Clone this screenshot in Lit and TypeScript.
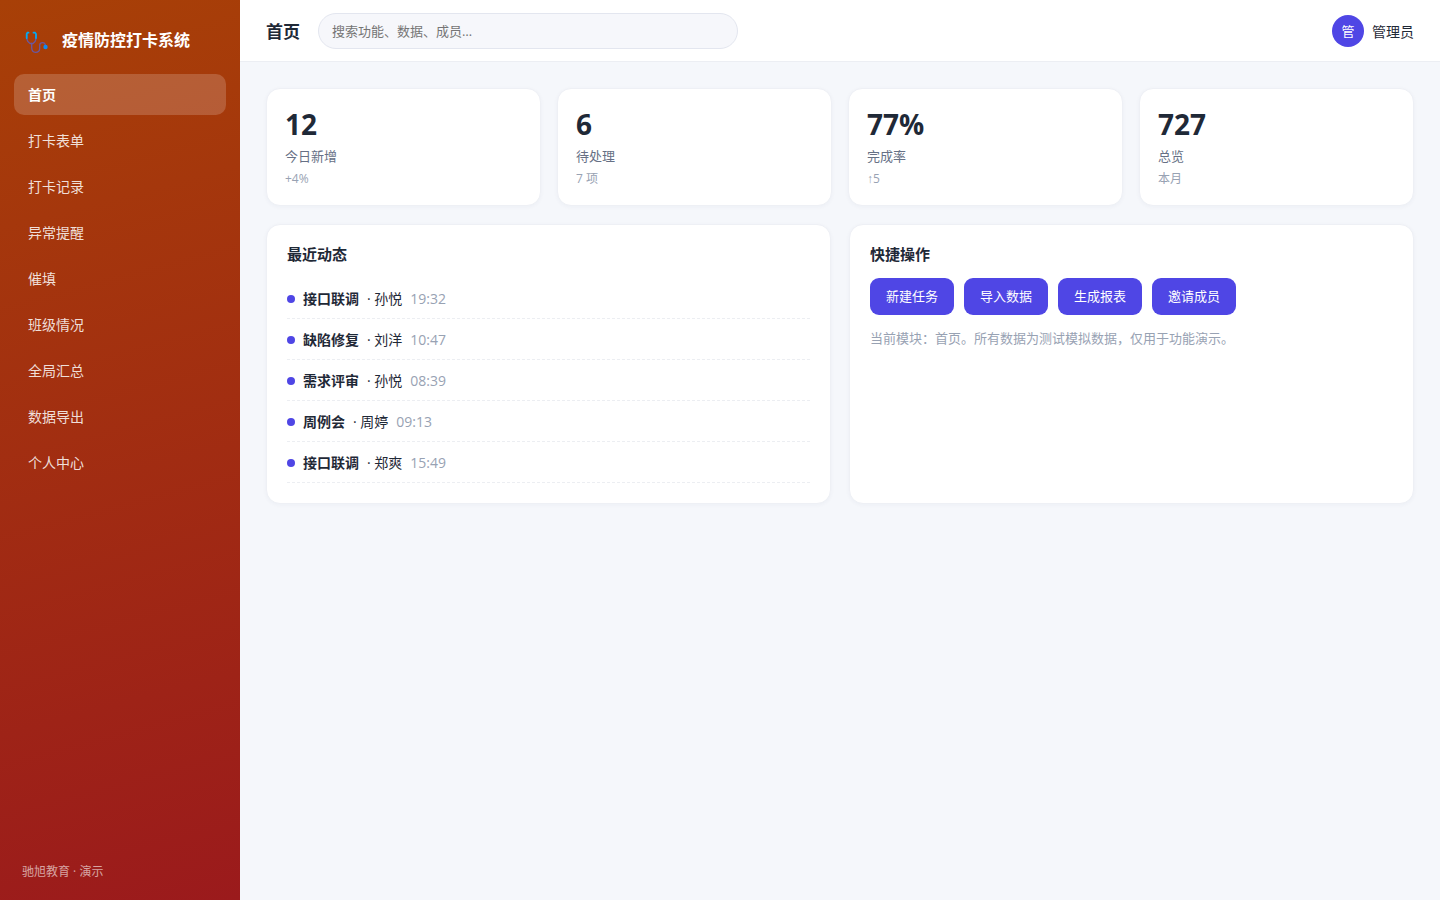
import { LitElement, html, css } from "lit";
import { customElement, state } from "lit/decorators.js";
import { classMap } from "lit/directives/class-map.js";

const NAV = ["首页", "打卡表单", "打卡记录", "异常提醒", "催填", "班级情况", "全局汇总", "数据导出", "个人中心"];

const STATS = [
  { value: "12", label: "今日新增", note: "+4%" },
  { value: "6", label: "待处理", note: "7 项" },
  { value: "77%", label: "完成率", note: "↑5" },
  { value: "727", label: "总览", note: "本月" },
];

const FEED = [
  { title: "接口联调", who: "孙悦", time: "19:32" },
  { title: "缺陷修复", who: "刘洋", time: "10:47" },
  { title: "需求评审", who: "孙悦", time: "08:39" },
  { title: "周例会", who: "周婷", time: "09:13" },
  { title: "接口联调", who: "郑爽", time: "15:49" },
];

const ACTIONS = ["新建任务", "导入数据", "生成报表", "邀请成员"];

@customElement("app-root")
export class AppRoot extends LitElement {
  @state() private current = "首页";

  static styles = css`
    :host {
      display: flex;
      min-height: 100vh;
      background: #f5f7fb;
      color: #1f2937;
      font: 14px/19px "Open Sans", "Liberation Sans", "Noto Sans CJK SC", sans-serif;
    }
    * {
      box-sizing: border-box;
    }
    .sidebar {
      flex: 0 0 240px;
      display: flex;
      flex-direction: column;
      padding: 22px 14px 19px;
      background: linear-gradient(165deg, #a84007, #9b1a1c);
      color: #fff;
    }
    .brand {
      display: flex;
      align-items: center;
      gap: 12px;
      padding: 0 8px;
      height: 36px;
      margin-bottom: 16px;
      font-size: 16px;
      font-weight: 700;
    }
    .logo {
      width: 28px;
      height: 28px;
    }
    .nav {
      display: flex;
      flex-direction: column;
      gap: 5px;
    }
    .link {
      padding: 11px 14px;
      border-radius: 10px;
      color: rgba(255, 255, 255, 0.85);
      text-decoration: none;
    }
    .link.active {
      background: rgba(255, 255, 255, 0.18);
      color: #fff;
      font-weight: 700;
    }
    .foot {
      margin-top: auto;
      padding: 0 8px;
      font-size: 12px;
      color: rgba(255, 255, 255, 0.6);
    }
    .page {
      flex: 1;
      min-width: 0;
    }
    .topbar {
      display: flex;
      align-items: center;
      gap: 18px;
      padding: 13px 26px 12px;
      background: #fff;
      border-bottom: 1px solid #eceef3;
    }
    .heading {
      margin: 0;
      font-size: 17px;
      line-height: 23px;
    }
    .search {
      flex: 0 1 420px;
      min-width: 0;
      height: 36px;
      padding: 0 13px;
      border: 1px solid #e3e6ef;
      border-radius: 18px;
      background: #f6f7fb;
      color: inherit;
      font: inherit;
      font-size: 13px;
    }
    .search::placeholder {
      color: #757575;
    }
    .user {
      display: flex;
      align-items: center;
      gap: 8px;
      margin-left: auto;
    }
    .avatar {
      display: grid;
      place-items: center;
      width: 32px;
      height: 32px;
      border-radius: 50%;
      background: #4f46e5;
      color: #fff;
      font-size: 13px;
    }
    .content {
      padding: 26px;
    }
    .stats {
      display: grid;
      grid-template-columns: repeat(4, 1fr);
      gap: 16px;
      margin-bottom: 18px;
    }
    .card {
      background: #fff;
      border: 1px solid #eef0f5;
      border-radius: 14px;
      box-shadow: 0 1px 4px rgba(30, 40, 90, 0.04);
    }
    .stat {
      padding: 17px 18px;
    }
    .value {
      font-size: 28px;
      font-weight: 700;
      line-height: 37px;
    }
    .label {
      margin-top: 4px;
      font-size: 13px;
      color: #667085;
    }
    .note {
      margin-top: 4px;
      font-size: 12px;
      line-height: 18px;
      color: #98a2b3;
    }
    .panels {
      display: grid;
      grid-template-columns: 1fr 1fr;
      gap: 18px;
    }
    .panel {
      padding: 19px 20px 20px;
    }
    .title {
      margin: 0 0 14px;
      font-size: 15px;
      line-height: 20px;
    }
    .feed {
      margin: 0;
      padding: 0;
      list-style: none;
    }
    .row {
      display: flex;
      align-items: center;
      gap: 8px;
      padding: 11px 0 10px;
      border-bottom: 1px dashed #eceef2;
    }
    .dot {
      width: 8px;
      height: 8px;
      border-radius: 50%;
      background: #4f46e5;
    }
    .time {
      color: #98a2b3;
    }
    .actions {
      display: flex;
      flex-wrap: wrap;
      gap: 10px;
      margin-bottom: 14px;
    }
    .action {
      height: 37px;
      padding: 0 16px;
      border: 0;
      border-radius: 9px;
      background: #4f46e5;
      color: #fff;
      font: inherit;
      font-size: 13px;
      cursor: pointer;
    }
    .hint {
      margin: 0;
      font-size: 13px;
      color: #98a2b3;
    }
  `;

  render() {
    return html`
      <aside class="sidebar">
        <div class="brand">
          <svg class="logo" viewBox="0 0 28 28" fill="none" stroke-width="1.3" stroke-linecap="round" aria-hidden="true">
            <path d="M4.700 9V12Q5 15.500 8 17.500H11Q14 15.500 14 12V9" stroke="#6a58a0" />
            <path d="M6.500 6.700H5.500L4.700 8V12M11.500 6.700H13L14 8V12" stroke="#03a9f4" stroke-width="1.800" />
            <path d="M9.700 17.500V22Q10 26.300 13.500 26.300Q17.700 26.300 17.700 22.500V19Q18 16.700 20.500 16.700Q23 16.700 23.500 19.500" stroke="#6a58a0" />
            <circle cx="23.500" cy="21" r="2.200" fill="#0d8cf5" />
          </svg>
          <span>疫情防控打卡系统</span>
        </div>
        <nav class="nav">
          ${NAV.map(
            (name) => html`<a
              href="#"
              class=${classMap({ link: true, active: name === this.current })}
              @click=${(e: Event) => {
                e.preventDefault();
                this.current = name;
              }}
              >${name}</a
            >`
          )}
        </nav>
        <div class="foot">驰旭教育 · 演示</div>
      </aside>
      <div class="page">
        <header class="topbar">
          <h1 class="heading">${this.current}</h1>
          <input class="search" type="search" aria-label="搜索" placeholder="搜索功能、数据、成员…" />
          <div class="user"><span class="avatar">管</span><span>管理员</span></div>
        </header>
        <main class="content">
          <section class="stats">
            ${STATS.map(
              (s) => html`<div class="card stat">
                <div class="value">${s.value}</div>
                <div class="label">${s.label}</div>
                <div class="note">${s.note}</div>
              </div>`
            )}
          </section>
          <section class="panels">
            <div class="card panel">
              <h2 class="title">最近动态</h2>
              <ul class="feed">
                ${FEED.map(
                  (f) => html`<li class="row">
                    <span class="dot"></span><b>${f.title}</b><span>· ${f.who}</span><span class="time">${f.time}</span>
                  </li>`
                )}
              </ul>
            </div>
            <div class="card panel">
              <h2 class="title">快捷操作</h2>
              <div class="actions">${ACTIONS.map((a) => html`<button class="action" type="button">${a}</button>`)}</div>
              <p class="hint">当前模块：${this.current}。所有数据为测试模拟数据，仅用于功能演示。</p>
            </div>
          </section>
        </main>
      </div>
    `;
  }
}
